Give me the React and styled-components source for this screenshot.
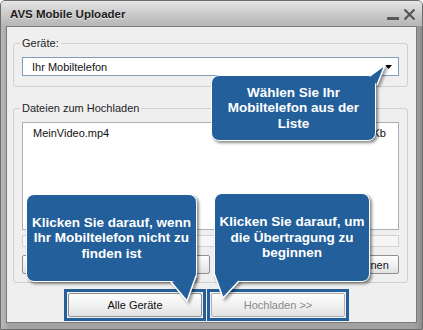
import styled, { createGlobalStyle } from "styled-components";

const GlobalStyle = createGlobalStyle`
  html, body {
    margin: 0;
    padding: 0;
    background: #ffffff;
  }
  body {
    font-family: "Liberation Sans", Arial, sans-serif;
  }
`;

export const Window = styled.div`
  position: relative;
  width: 423px;
  height: 330px;
  box-sizing: border-box;
  display: flex;
  flex-direction: column;
  background: linear-gradient(90deg, #b9b9b9, #a2a2a2 2%, #a2a2a2 98%, #8e8e8e);
  border: 1px solid #6c6c6c;
  border-radius: 5px 5px 0 0;
  overflow: hidden;
`;

export const TitleBar = styled.div`
  height: 25px;
  flex: none;
  display: flex;
  align-items: center;
  padding: 0 6px 0 9px;
  background: linear-gradient(#e6e6e6, #cdcdcd 45%, #b6b6b6);
`;

export const Title = styled.span`
  flex: 1;
  font-size: 11.5px;
  font-weight: bold;
  color: #1c1c1c;
  text-shadow: 0 1px 0 rgba(255, 255, 255, 0.6);
`;

export const Controls = styled.div`
  display: flex;
  align-items: flex-end;
  gap: 4px;
  margin-top: 2px;
`;

export const Client = styled.div`
  flex: 1;
  margin: 0 5px 6px 5px;
  background: #efefef;
  border: 1px solid #7a7a7a;
  padding: 10px 6px 0 6px;
  display: flex;
  flex-direction: column;
`;

export const Group = styled.fieldset`
  width: 395px;
  box-sizing: border-box;
  margin: ${({ $gap }) => $gap || 0}px 0 0 0;
  border: 1px solid #d0d0d0;
  border-radius: 3px;
  padding: 7px 8px ${({ $bottom }) => $bottom || 10}px 8px;
  min-width: 0;
`;

export const Legend = styled.legend`
  font-size: 11px;
  line-height: 13px;
  color: #1e1e1e;
  padding: 0 2px;
  margin-left: -2px;
`;

export const Select = styled.div`
  height: 19px;
  box-sizing: border-box;
  border: 1px solid #7f9db9;
  background: #ffffff;
  display: flex;
  align-items: center;
  padding: 0 6px 0 9px;
  font-size: 11px;
  color: #111;
`;

export const SelectText = styled.span`
  flex: 1;
`;

export const List = styled.div`
  height: 108px;
  box-sizing: border-box;
  border: 1px solid #a9afb6;
  background: #ffffff;
  padding: 3px 12px 0 10px;
`;

export const FileRow = styled.div`
  display: flex;
  justify-content: space-between;
  font-size: 11px;
  line-height: 14px;
  color: #111;
`;

export const Progress = styled.div`
  height: 12px;
  margin-top: 5px;
  box-sizing: border-box;
  border: 1px solid #d2d2d2;
  background: #f6f6f6;
`;

export const ButtonRow = styled.div`
  display: flex;
  justify-content: space-between;
  margin-top: 8px;
`;

export const Button = styled.button`
  display: block;
  width: ${({ $w }) => $w}px;
  height: ${({ $h }) => $h || 19}px;
  box-sizing: border-box;
  padding: 0;
  font-family: "Liberation Sans", Arial, sans-serif;
  font-size: 11px;
  color: ${({ disabled }) => (disabled ? "#8a8a8a" : "#111")};
  background: linear-gradient(#fdfdfd, #f1f1f1 50%, #e1e1e1);
  border: 1px solid ${({ disabled }) => (disabled ? "#b0b0b0" : "#8f8f8f")};
  border-radius: 2px;
`;

export const Highlight = styled.div`
  border: 3px solid #245f99;
  padding: 1px;
`;

export const FooterRow = styled.div`
  display: flex;
  gap: 1px;
  margin: 6px 0 0 51px;
`;

export const Callout = styled.div`
  position: absolute;
  left: ${({ $x }) => $x}px;
  top: ${({ $y }) => $y}px;
  width: ${({ $w }) => $w}px;
  height: ${({ $h }) => $h}px;
  box-sizing: border-box;
  background: #23609b;
  border: 1.5px solid #ffffff;
  border-radius: 8px;
  box-shadow: 2px 2px 3px rgba(0, 0, 0, 0.45);
  display: flex;
  align-items: center;
  justify-content: center;
  text-align: center;
  color: #ffffff;
  font-family: "Liberation Sans", Arial, sans-serif;
  font-weight: bold;
  font-size: 13.5px;
  line-height: 15.5px;
`;

export const Pointer = styled.svg`
  position: absolute;
  left: ${({ $x }) => $x}px;
  top: ${({ $y }) => $y}px;
  overflow: visible;
  filter: drop-shadow(2px 2px 1.5px rgba(0, 0, 0, 0.4));
`;

function CalloutPointer({ x, y, pts }) {
  const d = pts.map((p) => p.join(",")).join(" ");
  return (
    <Pointer $x={x} $y={y} width="30" height="30" viewBox="0 0 30 30">
      <polygon points={d} fill="#23609b" />
      <polyline
        points={d}
        fill="none"
        stroke="#ffffff"
        strokeWidth="1.5"
        strokeLinejoin="miter"
      />
    </Pointer>
  );
}

const callouts = [
  {
    x: 210,
    y: 74,
    w: 165,
    h: 66,
    lines: ["Wählen Sie Ihr", "Mobiltelefon aus der", "Liste"],
    px: 148,
    py: -12,
    pts: [
      [10, 12],
      [25, 1],
      [17, 21],
    ],
  },
  {
    x: 25,
    y: 193,
    w: 171,
    h: 88,
    lines: ["Klicken Sie darauf, wenn", "Ihr Mobiltelefon nicht zu", "finden ist"],
    px: 140,
    py: 78,
    pts: [
      [4, 9],
      [20, 28],
      [29, 3],
    ],
  },
  {
    x: 213,
    y: 192,
    w: 156,
    h: 89,
    lines: ["Klicken Sie darauf, um", "die Übertragung zu", "beginnen"],
    px: -2,
    py: 76,
    pts: [
      [1, 3],
      [10, 28],
      [26, 11],
    ],
  },
];

export default function App() {
  return (
    <>
      <GlobalStyle />
      <Window>
        <TitleBar>
          <Title>AVS Mobile Uploader</Title>
          <Controls>
            <svg width="12" height="5" viewBox="0 0 12 5">
              <rect x="0" y="1" width="12" height="3" fill="#5a5a5a" />
            </svg>
            <svg width="13" height="13" viewBox="0 0 13 13">
              <path
                d="M1.5 1.5 L11.5 11.5 M11.5 1.5 L1.5 11.5"
                stroke="#555"
                strokeWidth="2.2"
                fill="none"
              />
            </svg>
          </Controls>
        </TitleBar>
        <Client>
          <Group>
            <Legend>Geräte:</Legend>
            <Select>
              <SelectText>Ihr Mobiltelefon</SelectText>
              <svg width="7" height="4" viewBox="0 0 7 4">
                <polygon points="0,0 7,0 3.5,4" fill="#000" />
              </svg>
            </Select>
          </Group>
          <Group $gap={15} $bottom={8}>
            <Legend>Dateien zum Hochladen</Legend>
            <List>
              <FileRow>
                <span>MeinVideo.mp4</span>
                <span>2 048 Kb</span>
              </FileRow>
            </List>
            <Progress />
            <ButtonRow>
              <Button $w={188} aria-label="Hinzufügen" />
              <Button $w={68}>Entfernen</Button>
            </ButtonRow>
          </Group>
          <FooterRow>
            <Highlight>
              <Button $w={134} $h={24}>
                Alle Geräte
              </Button>
            </Highlight>
            <Highlight>
              <Button $w={134} $h={24} disabled>
                Hochladen &gt;&gt;
              </Button>
            </Highlight>
          </FooterRow>
        </Client>
        {callouts.map((c) => (
          <Callout key={c.lines[0]} $x={c.x} $y={c.y} $w={c.w} $h={c.h}>
            <div>
              {c.lines.map((l) => (
                <div key={l}>{l}</div>
              ))}
            </div>
            <CalloutPointer x={c.px} y={c.py} pts={c.pts} />
          </Callout>
        ))}
      </Window>
    </>
  );
}
